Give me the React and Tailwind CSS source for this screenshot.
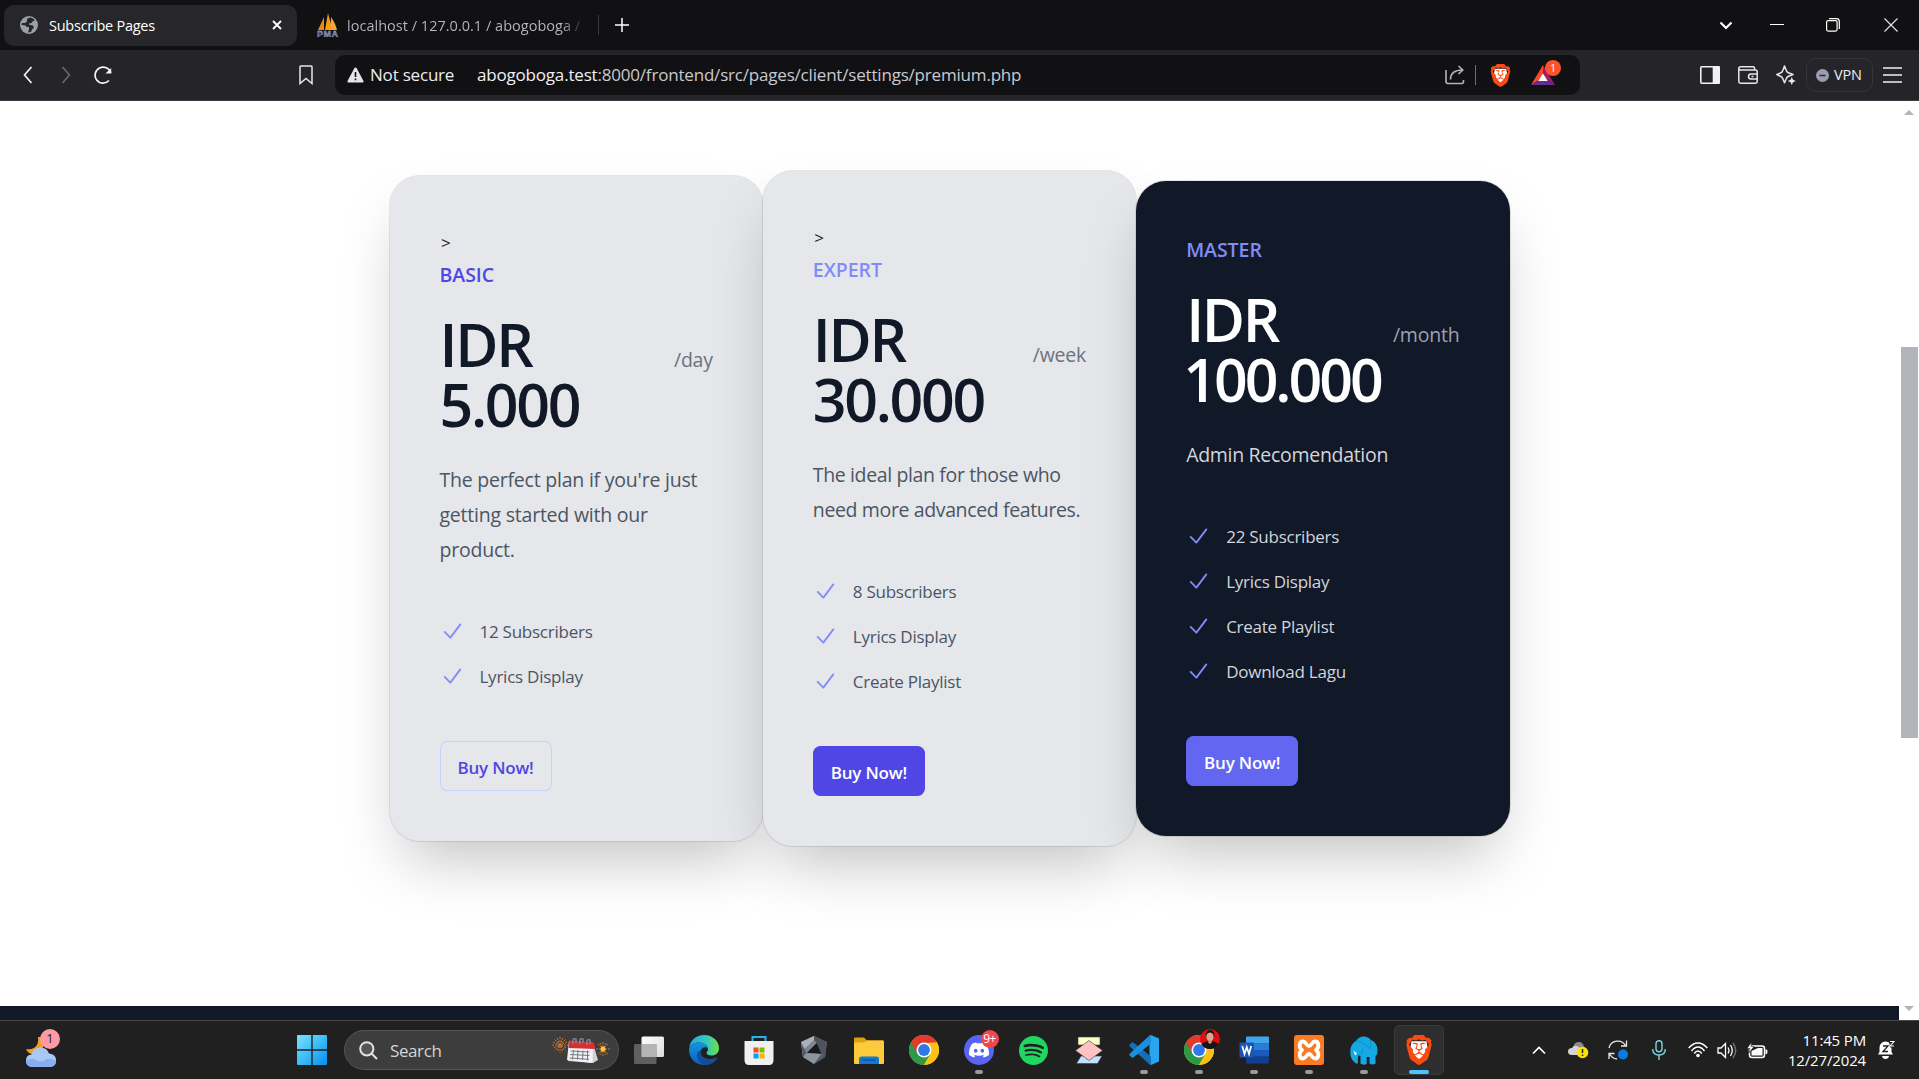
import React from "react";
import { SiBrave, SiDiscord, SiSpotify } from "react-icons/si";

const plans = [
  {
    name: "BASIC",
    price: "5.000",
    period: "/day",
    stray: true,
    description: ["The perfect plan if you're just", "getting started with our", "product."],
    descriptionClass: "tracking-[-0.22px] text-[#4b5563]",
    features: ["12 Subscribers", "Lyrics Display"],
    nameClass: "text-[#4f46e5]",
    button: "text-[#4f46e5] shadow-[inset_0_0_0_1px_#c7d2fe]",
  },
  {
    name: "EXPERT",
    price: "30.000",
    period: "/week",
    stray: true,
    description: ["The ideal plan for those who", "need more advanced features."],
    descriptionClass: "tracking-[-0.37px] text-[#4b5563]",
    features: ["8 Subscribers", "Lyrics Display", "Create Playlist"],
    nameClass: "text-[#818cf8]",
    button: "text-white bg-[#4f46e5]",
  },
  {
    name: "MASTER",
    price: "100.000",
    period: "/month",
    dark: true,
    description: ["Admin Recomendation"],
    descriptionClass: "tracking-[-0.3px] text-[#d1d5db]",
    features: ["22 Subscribers", "Lyrics Display", "Create Playlist", "Download Lagu"],
    nameClass: "text-[#818cf8]",
    button: "text-white bg-[#6366f1]",
  },
];

function Check() {
  return (
    <svg viewBox="0 0 20 20" className="h-[30px] w-[25px] shrink-0" fill="#818cf8">
      <path d="M16.704 4.153a.75.75 0 01.143 1.052l-8 10.5a.75.75 0 01-1.127.075l-4.5-4.5a.75.75 0 011.06-1.06l3.894 3.893 7.48-9.817a.75.75 0 011.05-.143z" />
    </svg>
  );
}

function PlanCard({ plan }) {
  const dark = plan.dark;
  return (
    <div
      className={
        "rounded-[30px] p-[50px] shadow-[0_0_0_1px_rgba(17,24,39,0.1),0_31px_62px_-15px_rgba(0,0,0,0.25)] " +
        (dark ? "bg-[#111827]" : "bg-[#e5e7eb]")
      }
    >
      {plan.stray && <div className="h-[30px] pl-[1.5px] text-[17px] leading-[34px] text-[#212529]">&gt;</div>}
      <h3 className={"h-[35px] text-[19.5px] leading-[38px] font-semibold tracking-[-0.05px] " + plan.nameClass}>{plan.name}</h3>
      <p className="mt-[23px] flex items-baseline justify-between">
        <span className={"text-[59px] leading-[60px] font-semibold tracking-[-2.3px] " + (dark ? "text-white" : "text-[#111827]")}>
          <span className="block">IDR</span>
          <span className={dark ? "-ml-[3px] block tracking-[-3px]" : "block"}>{plan.price}</span>
        </span>
        <span className={"text-[19.5px] tracking-[-0.2px] " + (dark ? "text-[#9ca3af]" : "text-[#6b7280]")}>{plan.period}</span>
      </p>
      <p className={"mt-[28px] mb-[-1px] text-[19.5px] leading-[35px] whitespace-nowrap " + plan.descriptionClass}>
        {plan.description.map((line) => (
          <span key={line} className="block">
            {line}
          </span>
        ))}
      </p>
      <ul className={"mt-[50px] flex flex-col gap-[15px] text-[17px] leading-[30px] tracking-[-0.25px] " + (dark ? "text-[#d1d5db]" : "text-[#4b5563]")}>
        {plan.features.map((f) => (
          <li key={f} className="flex h-[30px] gap-[15px]">
            <Check />
            <span className="leading-[32px]">{f}</span>
          </li>
        ))}
      </ul>
      <button className={"mt-[50px] flex h-[50px] w-[112px] items-center justify-center rounded-[7.5px] pt-[3px] text-[17px] font-semibold tracking-[-0.2px] " + plan.button}>
        Buy Now!
      </button>
    </div>
  );
}

function Stroke({ w = 20, h = 20, box, d, color = "#e8e8ec", sw = 1.5, className = "", children }) {
  return (
    <svg width={w} height={h} viewBox={box || `0 0 ${w} ${h}`} fill="none" stroke={color} strokeWidth={sw} className={"shrink-0 " + className}>
      {d && <path d={d} />}
      {children}
    </svg>
  );
}

function TabStrip() {
  return (
    <div className="flex h-[50px] items-center bg-[#111113]">
      <div className="ml-1 flex h-[41px] w-[293px] items-center rounded-[10px] bg-[#27272b] pl-4 pr-[15px]">
        <svg width="18" height="18" viewBox="0 0 18 18">
          <circle cx="9" cy="9" r="9" fill="#9aa0a6" />
          <path d="M9.5 1.5L7 3v2.5L5 7H2l-.6 2 3.6.3L7 11h2v2.5L8 16.4l3-.4 1-2.5 2-2-1.5-2.200-3-.3L9 7.500l2.500-.5L13 5l2-.500C13.500 2.500 11.500 1.600 9.500 1.500z" fill="#27272b" />
        </svg>
        <span className="ml-[11px] pt-px text-[14.5px] tracking-[-0.25px] text-white">Subscribe Pages</span>
        <Stroke w={10} h={10} d="M1 1L9 9M9 1L1 9" color="#fff" sw={1.8} className="ml-auto" />
      </div>
      <svg width="22" height="24" viewBox="0 0 22 24" className="ml-5">
        <path d="M1 17L7 4V17z" fill="#e88a17" />
        <path d="M8 17L11 0c1 5 4 12 4 17z" fill="#f89c0e" />
        <path d="M14 17V4c3 4 5 9 6 13z" fill="#f6a83a" />
        <text x="0" y="23.5" fontFamily="Liberation Sans" fontWeight="700" fontSize="9" textLength="21" fill="#444a7c" stroke="#b9bcd8" strokeWidth="0.4">PMA</text>
      </svg>
      <span className="ml-2 w-[239px] overflow-hidden bg-gradient-to-r from-[#b9b9bd] from-90% to-[#111113] bg-clip-text pt-px text-[14.5px] tracking-[0.02px] whitespace-nowrap text-transparent">
        localhost / 127.0.0.1 / abogoboga / user
      </span>
      <div className="ml-[12px] h-5 w-px bg-[#3a3a3e]" />
      <Stroke w={14} h={14} d="M7 0V14M0 7H14" color="#fff" className="ml-4" />
      <Stroke w={14} h={9} d="M1.5 1.5L7 7L12.5 1.5" color="#fff" sw={2.2} className="ml-auto" />
      <Stroke w={14} h={14} d="M0 6.5H14" color="#fff" sw={1} className="ml-[37px]" />
      <Stroke w={14} h={14} color="#fff" sw={1.2} className="ml-[42px]">
        <rect x="0.6" y="2.6" width="10.5" height="10.5" rx="1.5" />
        <path d="M3 .6h7.5a2.8 2.8 0 0 1 2.8 2.8V11" />
      </Stroke>
      <Stroke w={14} h={14} d="M0.5 0.5L13.5 13.5M13.5 0.5L0.5 13.5" color="#e8e8e8" sw={1.1} className="ml-[44px] mr-[21px]" />
    </div>
  );
}

function Toolbar() {
  return (
    <div className="flex h-[51px] items-center border-b border-[#3a3a3f] bg-[#252529]">
      <Stroke w={10} h={18} d="M8.5 1L1.5 9L8.5 17" color="#f2f2f4" sw={1.7} className="ml-[22.5px]" />
      <Stroke w={10} h={18} d="M1.5 1L8.5 9L1.5 17" color="#66666c" sw={1.7} className="ml-7" />
      <Stroke w={20} h={20} color="#f2f2f4" sw={1.7} className="ml-[22px]">
        <path d="M17.8 8A8 8 0 1 0 16 15.500" />
        <path d="M12.500 8.600h5.700V3z" fill="#f2f2f4" stroke="none" />
      </Stroke>
      <Stroke w={14} h={20} d="M1 1.800Q1 1 1.800 1H12.200Q13 1 13 1.800V18.500L7 13.500L1 18.500z" className="ml-[186.5px]" />
      <div className="ml-[22px] flex h-10 w-[1245px] items-center rounded-[10px] bg-[#111113] pl-3">
        <svg width="17" height="16" viewBox="0 0 17 16">
          <path d="M8.500 0.500Q9.300.5 9.800 1.400L16.500 14Q17 15.500 15.500 15.500H1.500Q0 15.500.5 14L7.200 1.400Q7.700.5 8.500.5z" fill="#e4e4ea" />
          <path d="M8.500 5v5M8.500 11.500v1.800" stroke="#111113" strokeWidth="1.600" />
        </svg>
        <span className="ml-[6px] w-[107px] text-[17px] tracking-[-0.2px] text-[#ececf0]">Not secure</span>
        <span className="text-[17px] tracking-[-0.19px] whitespace-nowrap text-[#c9c9d0]">
          <span className="text-[#f0f0f4]">abogoboga.test</span>:8000/frontend/src/pages/client/settings/premium.php
        </span>
        <Stroke w={20} h={20} color="#b4b4ba" sw={1.6} className="ml-auto">
          <path d="M1 5V16.500Q1 18.500 3 18.500H16.500Q18.500 18.500 18.500 16.500V15" />
          <path d="M5.500 14.500C5.500 8 10 5 17.500 5M13.500 1L17.800 5L13.500 9" />
        </Stroke>
        <div className="ml-[10px] h-5 w-px bg-[#6e6e74]" />
        <div className="ml-3.5 flex h-[23px] w-5 items-center justify-center">
          <BraveMark size={23} />
        </div>
        <div className="relative ml-[21px] mr-[25px] h-5 w-6">
          <svg width="24" height="20" viewBox="0 0 24 20">
            <path d="M12 0L0 20L12 12.500z" fill="#ff4724" />
            <path d="M12 0L24 20L12 12z" fill="#9e1f63" />
            <path d="M0 20L7 15.500H17L24 20z" fill="#662d91" />
            <path d="M12 8.500L16.800 16H7.200z" fill="#fff" />
          </svg>
          <span className="absolute -top-[5px] left-[14px] flex size-4 items-center justify-center rounded-full bg-[#fb542b] text-[10px] text-white">1</span>
        </div>
      </div>
      <Stroke w={20} h={18} color="#f0f0f2" sw={1.6} className="ml-auto">
        <rect x="0.8" y="0.8" width="18.4" height="16.4" rx="1" />
        <path d="M13.500 1H19V17H13.500z" fill="#f0f0f2" />
      </Stroke>
      <Stroke w={20} h={18} sw={1.5} className="ml-[18px]">
        <path d="M16.500 4V2Q16.500 .8 15.300 .8H2.500Q.8 .8 .8 2.500V15.500Q.8 17.200 2.500 17.200H17.500Q19.200 17.200 19.200 15.500V6Q19.200 4 17.500 4H2.500Q.8 4 .8 2.500" />
        <path d="M19 8H13Q10.500 8 10.500 10.500T13 13H19M13.500 10.500h2" />
      </Stroke>
      <Stroke w={20} h={20} sw={1.5} className="ml-[18px]">
        <path d="M8.500 1L10.300 5.500Q11 7.500 13 8L17 9.500L12.500 11.300Q11 12 10.400 13.500L8.500 17.800L6.700 13.500Q6 12 4.500 11.300L.8 9.500L4.500 8Q6.200 7.500 6.800 5.500z" strokeLinejoin="round" />
        <path d="M15.800 12l1.200 2.800 2.800 1.200-2.800 1.200-1.200 2.800-1.200-2.800-2.800-1.200 2.800-1.200z" fill="#e8e8ec" stroke="none" />
      </Stroke>
      <div className="ml-[10px] flex h-[34px] w-[67px] items-center rounded-[10px] border border-[#35353a] pl-[9px]">
        <Stroke w={13} h={13} d="M3.500 6.500h6" color="#252529" className="rounded-full bg-[#9b9bb2]" sw={1.5} />
        <span className="ml-[5px] text-[14.5px] tracking-[-0.2px] text-[#ececf0]">VPN</span>
      </div>
      <Stroke w={19} h={16} d="M0 1H19M0 8H19M0 15H19" color="#f0f0f2" sw={1.5} className="ml-[10px] mr-[17px]" />
    </div>
  );
}

function BraveMark({ size }) {
  return (
    <span className="relative flex">
      <svg width={size} height={size} viewBox="0 0 24 24" className="absolute">
        <path d="M6 5h12l1 6-7 10-7-10z" fill="#fff" />
      </svg>
      <SiBrave size={size} color="#fb4a12" className="relative" />
    </span>
  );
}

function ChromeMark() {
  return (
    <svg width="30" height="30" viewBox="0 0 30 30">
      <circle cx="15" cy="15" r="15" fill="#fbc116" />
      <path d="M15 15L2 7.500A15 15 0 0 0 15 30L21.500 18.700z" fill="#2a9a48" />
      <path d="M2 7.500A15 15 0 0 1 28 7.500L15 8L8.500 18.700z" fill="#e23b2e" />
      <path d="M28 7.500A15 15 0 0 1 15 30L21.500 18.700L20 8z" fill="#fbc116" />
      <circle cx="15" cy="15" r="7.500" fill="#fff" />
      <circle cx="15" cy="15" r="5.900" fill="#3078ea" />
    </svg>
  );
}

const icons = {
  taskview: (
    <svg width="30" height="28" viewBox="0 0 30 28">
      <defs>
        <linearGradient id="tv" x2="1" y2="1"><stop stopColor="#fff" /><stop offset="1" stopColor="#dcdcdc" /></linearGradient>
      </defs>
      <rect x="7.500" y="0.500" width="22.500" height="20.500" rx="1.500" fill="url(#tv)" />
      <rect x="0" y="8" width="22.500" height="20" rx="1.500" fill="#6b6b6b" opacity="0.85" />
      <path d="M7.500 8H22.500V21H7.500z" fill="#b4b4b4" />
    </svg>
  ),
  edge: (
    <svg width="30" height="30" viewBox="0 0 30 30">
      <defs>
        <linearGradient id="e1" x1="0" x2="1"><stop stopColor="#2aa7e8" /><stop offset="0.550" stopColor="#30c6c0" /><stop offset="1" stopColor="#6fe04a" /></linearGradient>
        <linearGradient id="e2" x2="0" y2="1"><stop stopColor="#1296dd" /><stop offset="1" stopColor="#0b5fc0" /></linearGradient>
      </defs>
      <path d="M0 13.500C1 5 7.500 0 15 0C24 0 30 6.500 30 13C30 18 26.500 20.500 22.500 20.500C19 20.500 17.500 19 17.500 18C17.500 17 19 16.500 19 14C19 10.500 15 7.500 10 7.500C5 7.500 1 10 0 13.500z" fill="url(#e1)" />
      <path d="M0 14.500C1 10 5 7.500 10 7.500C15 7.500 19 10.500 19 13.500C17.500 11.500 12.500 11.500 11.500 17C10.500 23 16 27.500 20 28.800C11 32.500 0 26.500 0 14.500z" fill="url(#e2)" />
      <path d="M11.800 15C10.500 22 18 26.500 27 22.500C28 22 28.500 22.800 28 23.500C26 27 22 30 17 30C11 29.500 8 24 8 20C8 17.500 10 15.500 11.800 15z" fill="#134f96" />
    </svg>
  ),
  store: (
    <svg width="30" height="30" viewBox="0 0 30 30">
      <path d="M8.500 7V2H21.500V7" fill="none" stroke="#2ab4ee" strokeWidth="2" />
      <path d="M.5 6H29.500V25Q29.500 30 25 30H5Q.5 30 .5 25z" fill="#f0f0f0" />
      <path d="M9.500 12.500h5v5h-5z" fill="#f1511b" /><path d="M15.500 12.500h5v5h-5z" fill="#80b900" />
      <path d="M9.500 18.500h5v5h-5z" fill="#00a4ef" /><path d="M15.500 18.500h5v5h-5z" fill="#fbb500" />
    </svg>
  ),
  hex: (
    <svg width="26" height="28" viewBox="0 0 26 28">
      <path d="M13 0L26 6L24 21L13 28L2 21L0 6z" fill="#6d747c" />
      <path d="M13 0L0 6L2 21L6 18L13 4z" fill="#a9b2ba" />
      <path d="M13 0L26 6L24 21L20 17L13 4z" fill="#4d545c" />
      <path d="M15.500 7L20.500 18L5.500 17z" fill="#17191d" />
      <path d="M5.500 17L15.500 7L13 4L3 13z" fill="#7e868e" />
      <path d="M5.500 17L20.500 18L13 28L2 21z" fill="#8b939b" />
      <path d="M20.500 18L24 21L13 28z" fill="#525a62" />
      <path d="M0 6L5.500 17L2 21z" fill="#535b63" />
    </svg>
  ),
  explorer: (
    <svg width="30" height="27" viewBox="0 0 30 27">
      <path d="M0 1.500Q0 .5 1 .5H10L13 3.500H29Q30 3.500 30 5V15H0z" fill="#e0a00c" />
      <path d="M0 6.500Q0 5.500 1 5.500H10L13 3.500H29Q30 3.500 30 5V26Q30 27 29 27H1Q0 27 0 26z" fill="#fccb3c" />
      <path d="M5 27V22Q5 19.500 7.500 19.500H22.500Q25 19.500 25 22V27z" fill="#1578cf" />
      <path d="M8.500 23h13" stroke="#0c4a94" strokeWidth="1.200" />
    </svg>
  ),
  chrome: <ChromeMark />,
  discord: (
    <span className="relative flex size-[30px] items-center justify-center rounded-full bg-[#5865f2]">
      <SiDiscord size={20} color="#fff" />
      <span className="absolute -top-[5px] left-[17px] flex size-[18px] items-center justify-center rounded-full bg-[#f0474a] text-[12px] tracking-[-0.5px] text-white">9+</span>
    </span>
  ),
  spotify: <SiSpotify size={29} color="#1ed760" />,
  flow: (
    <svg width="28" height="28" viewBox="0 0 28 28" stroke="#3a3a3a" strokeWidth="0.600">
      <path d="M3 1H25V9H3z" fill="#ffffc4" />
      <path d="M6 20H27L22.500 27.500H1.500z" fill="#c4e0ff" />
      <path d="M14 4.500L27.500 14.500L14 24.500L.5 14.500z" fill="#ffc2c2" />
    </svg>
  ),
  vscode: (
    <svg width="30" height="30" viewBox="0 0 30 30">
      <path d="M22 0L30 3.500V26.500L22 30L20.500 29V1z" fill="#2aa5f0" />
      <path d="M.6 9.500L2.800 7.500Q3.500 7 4.300 7.600L22 21.500V30Q20.800 29.800 20 29L.6 11.200Q0 10.300.6 9.500z" fill="#0f72b8" />
      <path d="M.6 20.500L2.800 22.500Q3.500 23 4.300 22.400L22 8.500V0Q20.800 .2 20 1L.6 18.800Q0 19.700.6 20.500z" fill="#1c8fdc" />
    </svg>
  ),
  chrome2: (
    <span className="relative">
      <ChromeMark />
      <svg width="20" height="20" viewBox="0 0 20 20" className="absolute -top-1.5 left-[16px]">
        <circle cx="10" cy="10" r="10" fill="#e00d12" />
        <path d="M1.500 15.500Q5 12 10 12T18.500 15Q15.500 20 10 20T1.500 15.500z" fill="#17141a" />
        <path d="M6 8Q5.500 1 10 1T14.500 8z" fill="#1a1416" />
        <ellipse cx="10" cy="7.500" rx="3.600" ry="5" fill="#d9a58c" />
        <path d="M6.200 6Q6.500 1.500 10 1.500T13.800 6Q12.500 3.500 10 3.500T6.200 6z" fill="#1a1416" />
        <path d="M8.500 11h3l.5 2.500-2 1.500-2-1.500z" fill="#c89076" />
      </svg>
    </span>
  ),
  word: (
    <svg width="30" height="28" viewBox="0 0 30 28">
      <path d="M7 1.500Q7 .5 8 .5H29Q30 .5 30 1.500V7.500H7z" fill="#41a5ee" />
      <path d="M7 7.300H30V14H7z" fill="#2b7cd3" /><path d="M7 14H30V20.700H7z" fill="#185abd" />
      <path d="M7 20.700H30V26.500Q30 27.500 29 27.500H8Q7 27.500 7 26.500z" fill="#103f91" />
      <rect x="0.500" y="6.500" width="14.500" height="15" rx="1" fill="#1a55b4" />
      <path d="M3.300 10L5.500 18L7.750 11L10 18L12.200 10" fill="none" stroke="#fff" strokeWidth="1.700" />
    </svg>
  ),
  xampp: (
    <span className="flex size-[30px] items-center justify-center rounded-[3px] bg-[#fb7a24]">
      <svg width="24" height="22" viewBox="0 0 24 22" fill="none" stroke="#fff" strokeWidth="3.800" strokeLinecap="round" strokeLinejoin="round">
        <path d="M5 11C1.500 8.500 2 2.500 6 2.500C9.500 2.500 9 7 12 7C15 7 14.500 2.500 18 2.500C22 2.500 22.500 8.500 19 11C22.500 13.500 22 19.500 18 19.500C14.500 19.500 15 15 12 15C9 15 9.500 19.500 6 19.500C2 19.500 1.500 13.500 5 11z" />
      </svg>
    </span>
  ),
  elephant: (
    <svg width="28" height="29" viewBox="0 0 28 29">
      <path d="M6 5Q9 0 15 .5Q19 1 21 4Q27 6.500 27.500 14Q27.500 19 25.500 20V27.500Q22.500 29.500 19.500 27.500V21H16.500V28Q13 29.500 10.500 27.500V20Q9 20 8.500 19Q7.500 23 8 26Q8.500 28 6 27.500Q0 24 .3 15Q.5 8 6 5z" fill="#14a9e2" />
      <path d="M6 5Q12 5 16 9T20 13Q22 8 20 4" fill="none" stroke="#0788c0" strokeWidth="0.800" />
      <path d="M8.500 19Q13 18 12.500 13M16.500 21V28" fill="none" stroke="#0788c0" strokeWidth="0.900" />
      <path d="M3.500 14.500L7 17.500L5 19.500z" fill="#fff" />
    </svg>
  ),
  brave: <BraveMark size={30} />,
};

const apps = [
  ["taskview"], ["edge"], ["store"], ["hex"], ["explorer"], ["chrome"], ["discord", "dot"], ["spotify"], ["flow"],
  ["vscode", "dot"], ["chrome2", "dot"], ["word", "dot"], ["xampp", "dot"], ["elephant", "dot"], ["brave", "active"],
];

function Taskbar() {
  return (
    <div className="flex h-[59px] items-center border-t border-[#474747] bg-[#202020]">
      <div className="relative ml-[25px] h-[38px] w-8">
        <svg width="32" height="38" viewBox="0 0 32 38">
          <path d="M13 6Q14 14 9 17Q5 19 1 18Q3 23 8 23L18 17V6z" fill="#f0a11c" />
          <path d="M8 36Q1 36 1 29.500Q1 24 6.500 23.500Q8 16.500 15.500 16.500Q22 16.500 24 22.500Q31 23 31 29.500Q31 36 24 36z" fill="#a9c8f8" />
          <path d="M8 36Q1 36 1 30Q6 26 11 29T20 29T31 30Q31 36 24 36z" fill="#86aef0" />
        </svg>
        <span className="absolute -top-0.5 left-[15px] flex size-5 items-center justify-center rounded-full bg-[#ff99a4] text-[13px] text-[#1c1c1c]">1</span>
      </div>
      <svg width="30" height="30" viewBox="0 0 30 30" className="ml-[240px]">
        <defs>
          <linearGradient id="win" gradientUnits="userSpaceOnUse" x1="0" y1="0" x2="30" y2="30"><stop stopColor="#7fe0fb" /><stop offset="0.500" stopColor="#3cbcf8" /><stop offset="1" stopColor="#0a8cf0" /></linearGradient>
        </defs>
        <path d="M1 0H14.300V14.300H0V1Q0 0 1 0zM15.700 0H29Q30 0 30 1V14.300H15.700zM0 15.700H14.300V30H1Q0 30 0 29zM15.700 15.700H30V29Q30 30 29 30H15.700z" fill="url(#win)" />
      </svg>
      <div className="ml-[17px] flex h-10 w-[275px] items-center rounded-full border border-[#555] bg-[#3d3d3d] pl-[14px]">
        <Stroke w={19} h={19} color="#e2e2e2" sw={2}>
          <circle cx="7.800" cy="7.800" r="6.600" fill="#555" />
          <path d="M12.500 12.500L18 18" />
        </Stroke>
        <span className="ml-[12px] pt-px text-[17px] tracking-[-0.4px] text-[#d4d4d4]">Search</span>
        <svg width="58" height="28" viewBox="0 0 58 28" className="ml-auto mr-2">
          <g stroke="#c9772f" strokeWidth="1" strokeDasharray="2 1"><path d="M8 1V17M0 9H16M2.500 3.500L13.500 14.500M13.500 3.500L2.500 14.500M5 2l6 14M11 2L5 16M1 6l14 6M15 6L1 12" /></g>
          <g stroke="#c9772f" strokeWidth="1" strokeDasharray="2 1"><path d="M51 6V20M44 13H58M46 8L56 18M56 8L46 18M48 7l6 12M54 7l-6 12" /></g>
          <circle cx="51" cy="13" r="2.500" fill="#ffc83d" />
          <path d="M17 5L41 7L46 24L41 27L16 25z" fill="#cfcfd9" />
          <path d="M17 5L41 7L40.500 27L15 24z" fill="#f3f3f6" />
          <path d="M17.500 4.500L42 6.500L43 13L16.500 12z" fill="#d5302f" />
          <path d="M18.500 15l19 1M18 18.500l19.500 1M17.500 22l19.500 1.300M21.500 14l-1 9.500M26 14l-.5 9.500M31 14.500l-.5 9.500M35.500 14.500v10" stroke="#777782" strokeWidth="1" />
          <path d="M21 8q-1-7 3-5v4M28 8q-1-7 3-5v4M35 9q-1-7 3-5v4" fill="none" stroke="#8a8fa6" strokeWidth="1.300" />
        </svg>
      </div>
      <div className="ml-[2px] flex">
        {apps.map(([id, state]) => (
          <div key={id} className="flex w-[55px] justify-center">
            <div
              className={
                "relative flex h-[50px] w-[50px] items-center justify-center rounded-[5px] border " +
                (state === "active" ? "border-[#3a3a3a] bg-[#2e2e2e]" : "border-transparent")
              }
            >
              {icons[id]}
              {state === "dot" && <span className="absolute bottom-0 left-5 h-1 w-2 rounded-full bg-[#9a9a9a]" />}
              {state === "active" && <span className="absolute bottom-0 left-[14px] h-1 w-5 rounded-full bg-[#4cc2ff]" />}
            </div>
          </div>
        ))}
      </div>
      <div className="ml-auto flex items-center">
        <Stroke w={14} h={9} d="M1 7.500L7 1.500L13 7.500" color="#fff" sw={1.7} />
        <svg width="21" height="18" viewBox="0 0 21 18" className="ml-[22px]">
          <path d="M6 10Q4 1 11 1Q15 1 16 6Q20 7 19 12z" fill="#8b8b8b" />
          <path d="M4 14Q0 14 0 10.500Q0 7 4 7Q6 3.500 10 5.500Q13 7 13 14z" fill="#d5d5d5" />
          <circle cx="14.500" cy="11.500" r="5.800" fill="#ffe100" />
          <path d="M14.500 8v4M14.500 13.500v1.500" stroke="#222" strokeWidth="1.500" />
        </svg>
        <Stroke w={21} h={20} color="#e8e8e8" sw={1.3} className="ml-[19px]">
          <path d="M1 8A9 9 0 0 1 17.500 5.500M18.500 .5V6H13M1 19V13.500H6.500M1.500 14Q4 18.500 9 19" />
          <circle cx="15" cy="14.500" r="5" fill="#0a7be0" stroke="none" />
        </Stroke>
        <Stroke w={14} h={20} color="#7fd3e4" sw={1.4} className="ml-[23px]">
          <rect x="4" y="0.700" width="6" height="11" rx="3" />
          <path d="M.7 9Q.7 15 7 15T13.300 9M7 15V20" />
        </Stroke>
        <Stroke w={20} h={16} color="#fff" sw={1.5} className="ml-[22px]">
          <path d="M.7 6Q5 1 10 1T19.300 6M3.500 9Q6.500 5 10 5T16.500 9M6.300 11.500Q8 9 10 9T13.700 11.500" />
          <circle cx="10" cy="13.500" r="1.800" fill="#fff" stroke="none" />
        </Stroke>
        <Stroke w={20} h={17} color="#fff" sw={1.3} className="ml-[9px]">
          <path d="M1 6H4L8.500 1.500V15.500L4 11H1zM11 5.500Q13 8.500 11 11.500M13.500 3Q17 8.500 13.500 14" />
          <path d="M16 1Q21.500 8.500 16 16" stroke="#777" />
        </Stroke>
        <svg width="21" height="17" viewBox="0 0 21 17" className="ml-[10px]">
          <rect x="2.500" y="4" width="15" height="11.500" rx="2.500" fill="none" stroke="#fff" strokeWidth="1.500" />
          <path d="M4.500 13.500V9L11 6H15.500V13.500z" fill="#fff" />
          <path d="M18.500 7.500H19.500Q20.500 7.500 20.500 9.700T19.500 12H18.500z" fill="#fff" />
          <path d="M4.500 0L0 6.500H3L2 11L7 4.500H4z" fill="#fff" stroke="#202020" strokeWidth="0.600" />
        </svg>
        <div className="ml-[10px] w-[88px] pb-px text-right text-[15px] leading-5 tracking-[-0.15px] whitespace-nowrap text-white">
          <div>11:45 PM</div>
          <div>12/27/2024</div>
        </div>
        <svg width="18" height="20" viewBox="0 0 18 20" className="ml-[11px] mr-6">
          <path d="M1 14.500L2.500 12V8Q2.500 2 8.500 1.500Q14.500 2 14.500 8V12L16 14.500z" fill="#fff" />
          <path d="M5 16H12Q11.500 19 8.500 19T5 16z" fill="#fff" />
          <path d="M6 6H11L6 11.500H11" fill="none" stroke="#202020" strokeWidth="1.300" />
          <path d="M12 .5H18V7.500H13z" fill="#202020" />
          <path d="M13 1.500H17L13 6H17" fill="none" stroke="#fff" strokeWidth="1.100" />
        </svg>
      </div>
    </div>
  );
}

export default function App() {
  return (
    <div className="flex h-[1079px] w-[1919px] flex-col overflow-hidden bg-white font-['Open_Sans','Noto_Sans',sans-serif]">
      <TabStrip />
      <Toolbar />
      <div className="flex h-[919px]">
        <main className="flex flex-1 flex-col justify-between bg-white pt-[70px]">
          <div className="mx-auto grid w-[1120px] grid-cols-3 items-center">
            {plans.map((plan) => (
              <PlanCard key={plan.name} plan={plan} />
            ))}
          </div>
          <div className="h-[14px] bg-[#111827]" />
        </main>
        <div className="flex w-5 flex-col items-center bg-white pt-[9px] pb-[9px]">
          <svg width="10" height="5" viewBox="0 0 10 5"><path d="M0 5L5 0L10 5z" fill="#b1b4ba" /></svg>
          <div className="mb-auto mt-[232px] h-[391px] w-[17px] bg-[#b1b4ba]" />
          <svg width="10" height="5" viewBox="0 0 10 5"><path d="M0 0L5 5L10 0z" fill="#b1b4ba" /></svg>
        </div>
      </div>
      <Taskbar />
    </div>
  );
}
